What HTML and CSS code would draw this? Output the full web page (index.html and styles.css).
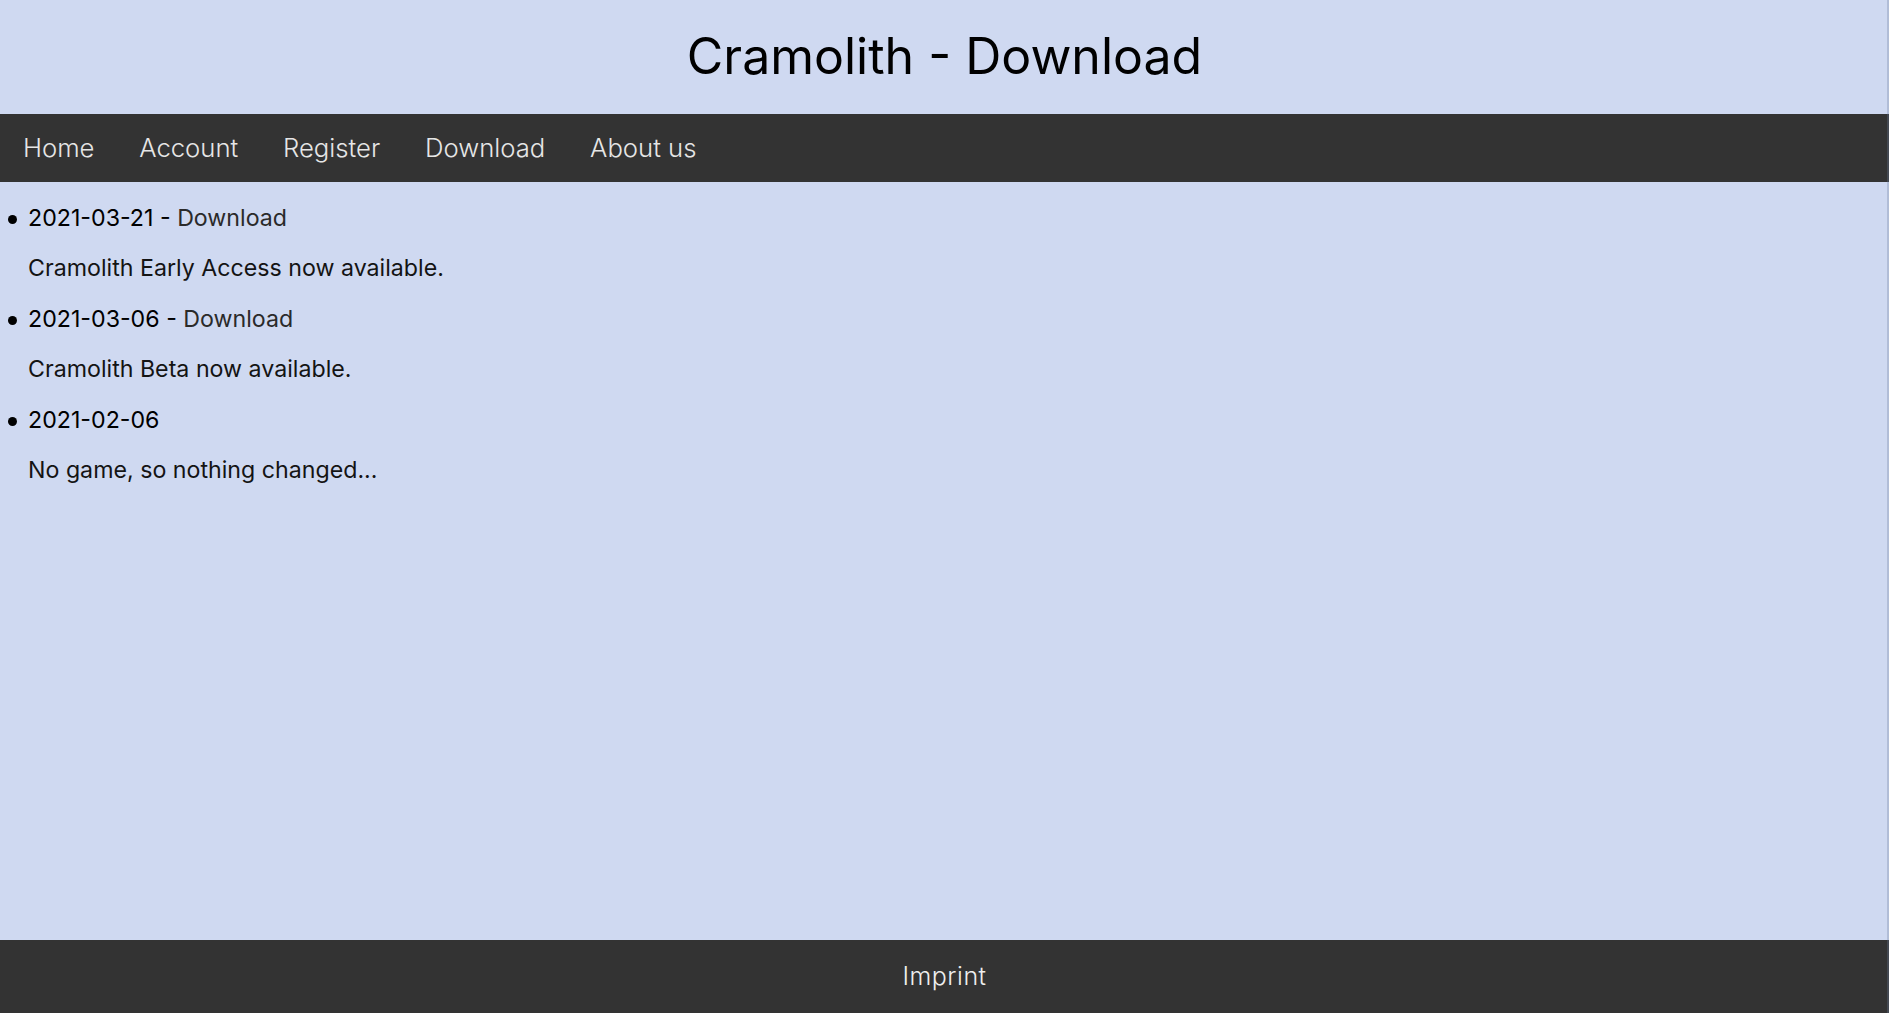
FILE: index.html
```html
<!DOCTYPE html>
<html lang="en">
<head>
<meta charset="utf-8">
<title>Cramolith - Download</title>
<link rel="stylesheet" href="styles.css">
</head>
<body>
<div class="page">
  <header class="site-header">
    <h1 class="site-title">Cramolith - Download</h1>
  </header>
  <nav class="main-nav">
    <a class="nav-link" href="#">Home</a>
    <a class="nav-link" href="#">Account</a>
    <a class="nav-link" href="#">Register</a>
    <a class="nav-link" href="#">Download</a>
    <a class="nav-link" href="#">About us</a>
  </nav>
  <main class="content">
    <ul class="news">
      <li class="news-item">
        <div class="news-head"><span class="news-date">2021-03-21</span> - <a class="news-link" href="#">Download</a></div>
        <p class="news-text">Cramolith Early Access now available.</p>
      </li>
      <li class="news-item">
        <div class="news-head"><span class="news-date">2021-03-06</span> - <a class="news-link" href="#">Download</a></div>
        <p class="news-text">Cramolith Beta now available.</p>
      </li>
      <li class="news-item">
        <div class="news-head"><span class="news-date">2021-02-06</span></div>
        <p class="news-text">No game, so nothing changed...</p>
      </li>
    </ul>
  </main>
  <footer class="site-footer">
    <a class="footer-link" href="#">Imprint</a>
  </footer>
</div>
<div class="edge"></div>
</body>
</html>
```

FILE: styles.css
```css
html, body {
  margin: 0;
  padding: 0;
}

body {
  background: #cfd9f1;
  font-family: Inter, "Noto Sans", "Liberation Sans", sans-serif;
  color: #111;
}

.page {
  min-height: 100vh;
  display: flex;
  flex-direction: column;
}

.site-header {
  height: 114px;
  box-sizing: border-box;
  padding-top: 27px;
  text-align: center;
}

.site-title {
  margin: 0;
  font-size: 50px;
  line-height: 58px;
  font-weight: 400;
  color: #000;
}

.main-nav {
  background: #333333;
  height: 68px;
  display: flex;
  align-items: center;
  padding-left: 0.5px;
}

.nav-link {
  padding: 0 22.4px;
  color: #e6e6e6;
  text-decoration: none;
  font-size: 25.7px;
  font-weight: 300;
  line-height: 68px;
}

.content {
  flex: 1;
  padding-top: 21px;
}

.news {
  margin: 0;
  padding: 0 0 0 28px;
  list-style: none;
}

.news-item {
  font-size: 23.2px;
  line-height: 30.4px;
}

.news-head {
  color: #000;
}

.news-head::before {
  content: "";
  display: inline-block;
  width: 9px;
  height: 9px;
  border-radius: 50%;
  background: #000;
  vertical-align: middle;
  margin: 0 11px 0 -20px;
}

.news-date {
  font-weight: 400;
  color: #000;
}

.news-link {
  color: #2a2a2a;
  text-decoration: none;
}

.news-text {
  margin: 20px 0;
  color: #141414;
}

.site-footer {
  background: #333333;
  height: 73px;
  text-align: center;
  line-height: 73px;
}

.footer-link {
  color: #eeeeee;
  text-decoration: none;
  font-size: 25px;
  font-weight: 300;
  letter-spacing: 0.5px;
}

.edge {
  position: fixed;
  top: 0;
  right: 0;
  width: 2px;
  height: 100vh;
  background: rgba(110, 125, 155, 0.3);
}
```
